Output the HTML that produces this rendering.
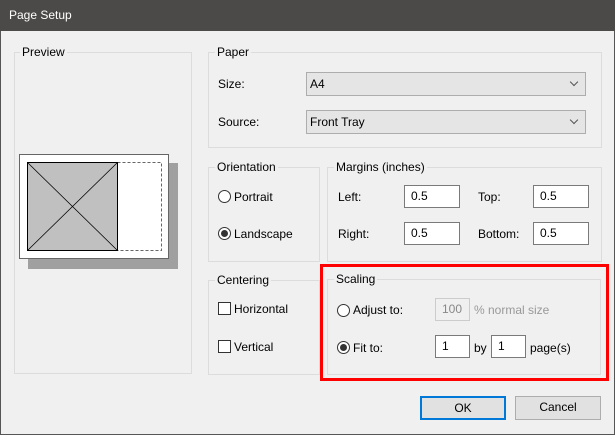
<!DOCTYPE html>
<html><head><style>
*{box-sizing:border-box;margin:0;padding:0}
body{width:615px;height:435px;background:#f0f0f0;font-family:"Liberation Sans",sans-serif;font-size:12px;color:#000;position:relative;overflow:hidden}
.a{position:absolute;white-space:nowrap}
.g{position:absolute;border:1px solid #dcdcdc}
.lb{position:absolute;background:#f0f0f0;padding:0 2px;line-height:14px}
.in{position:absolute;background:#fff;border:1px solid #7a7a7a;padding:3px 0 0 6px;line-height:14px}
.cb{position:absolute;background:#e5e5e5;border:1px solid #adadad;padding:4px 0 0 3px;line-height:14px}
.cb:after{content:"";position:absolute;right:8px;top:6px;width:5px;height:5px;border-right:1px solid #555;border-bottom:1px solid #555;transform:rotate(45deg)}
.rd{position:absolute;width:13px;height:13px;border:1px solid #333;border-radius:50%;background:#fff}
.rd.on:after{content:"";position:absolute;left:2px;top:2px;width:7px;height:7px;border-radius:50%;background:#333}
.ck{position:absolute;width:13px;height:13px;border:1px solid #333;background:#fff}
.bt{position:absolute;background:#e1e1e1;border:1px solid #adadad;text-align:center;line-height:21px}
</style></head><body>
<div class="a" style="left:0;top:0;width:615px;height:31px;background:#4c4a48"></div>
<div class="a" style="left:9px;top:8px;color:#fff;font-size:12px">Page Setup</div>
<div class="a" style="left:0;top:31px;width:1px;height:404px;background:#555"></div>
<div class="a" style="right:0;top:31px;width:1px;height:404px;background:#555"></div>
<div class="a" style="left:0;bottom:0;width:615px;height:1px;background:#555"></div>

<div class="g" style="left:14px;top:52px;width:178px;height:322px"></div>
<div class="lb" style="left:20px;top:45px">Preview</div>
<div class="a" style="left:28px;top:163px;width:150px;height:106px;background:#a0a0a0"></div>
<div class="a" style="left:19px;top:154px;width:150px;height:105px;background:#fff;border:1px solid #666"></div>
<svg class="a" style="left:19px;top:154px" width="150" height="105">
<rect x="8.5" y="8.5" width="134" height="88" fill="none" stroke="#666" stroke-dasharray="3,2"/>
<rect x="8.5" y="8.5" width="90" height="88" fill="#c0c0c0" stroke="#000"/>
<line x1="8.5" y1="8.5" x2="98.5" y2="96.5" stroke="#000" stroke-width=".8"/>
<line x1="98.5" y1="8.5" x2="8.5" y2="96.5" stroke="#000" stroke-width=".8"/>
</svg>

<div class="g" style="left:208px;top:52px;width:394px;height:96px"></div>
<div class="lb" style="left:215px;top:45px">Paper</div>
<div class="a" style="left:218px;top:77px">Size:</div>
<div class="cb" style="left:306px;top:72px;width:280px;height:24px">A4</div>
<div class="a" style="left:218px;top:115px">Source:</div>
<div class="cb" style="left:306px;top:110px;width:280px;height:24px">Front Tray</div>

<div class="g" style="left:208px;top:167px;width:112px;height:95px"></div>
<div class="lb" style="left:215px;top:160px">Orientation</div>
<div class="rd" style="left:218px;top:190px"></div><div class="a" style="left:234px;top:190px">Portrait</div>
<div class="rd on" style="left:218px;top:227px"></div><div class="a" style="left:234px;top:227px">Landscape</div>

<div class="g" style="left:327px;top:167px;width:275px;height:95px"></div>
<div class="lb" style="left:334px;top:160px">Margins (inches)</div>
<div class="a" style="left:338px;top:190px">Left:</div>
<div class="in" style="left:404px;top:185px;width:56px;height:23px">0.5</div>
<div class="a" style="left:478px;top:190px">Top:</div>
<div class="in" style="left:533px;top:185px;width:56px;height:23px">0.5</div>
<div class="a" style="left:338px;top:227px">Right:</div>
<div class="in" style="left:404px;top:222px;width:56px;height:23px">0.5</div>
<div class="a" style="left:478px;top:227px">Bottom:</div>
<div class="in" style="left:533px;top:222px;width:56px;height:23px">0.5</div>

<div class="g" style="left:208px;top:280px;width:112px;height:95px"></div>
<div class="lb" style="left:215px;top:273px">Centering</div>
<div class="ck" style="left:218px;top:302px"></div><div class="a" style="left:234px;top:302px">Horizontal</div>
<div class="ck" style="left:218px;top:340px"></div><div class="a" style="left:234px;top:340px">Vertical</div>

<div class="g" style="left:327px;top:279px;width:274px;height:96px"></div>
<div class="lb" style="left:334px;top:272px">Scaling</div>
<div class="rd" style="left:337px;top:304px"></div><div class="a" style="left:353px;top:303px">Adjust to:</div>
<div class="in" style="left:435px;top:298px;width:35px;height:23px;background:#f0f0f0;border-color:#ccc;color:#888">100</div>
<div class="a" style="left:474px;top:303px;color:#999">% normal size</div>
<div class="rd on" style="left:337px;top:341px"></div><div class="a" style="left:353px;top:341px">Fit to:</div>
<div class="in" style="left:435px;top:335px;width:35px;height:23px">1</div>
<div class="a" style="left:474px;top:341px">by</div>
<div class="in" style="left:491px;top:335px;width:35px;height:23px">1</div>
<div class="a" style="left:530px;top:341px">page(s)</div>
<div class="a" style="left:320px;top:264px;width:289px;height:117px;border:3px solid #f00"></div>

<div class="bt" style="left:420px;top:396px;width:86px;height:24px;border:2px solid #0078d7;line-height:20px">OK</div>
<div class="bt" style="left:515px;top:396px;width:86px;height:24px">Cancel</div>
</body></html>
